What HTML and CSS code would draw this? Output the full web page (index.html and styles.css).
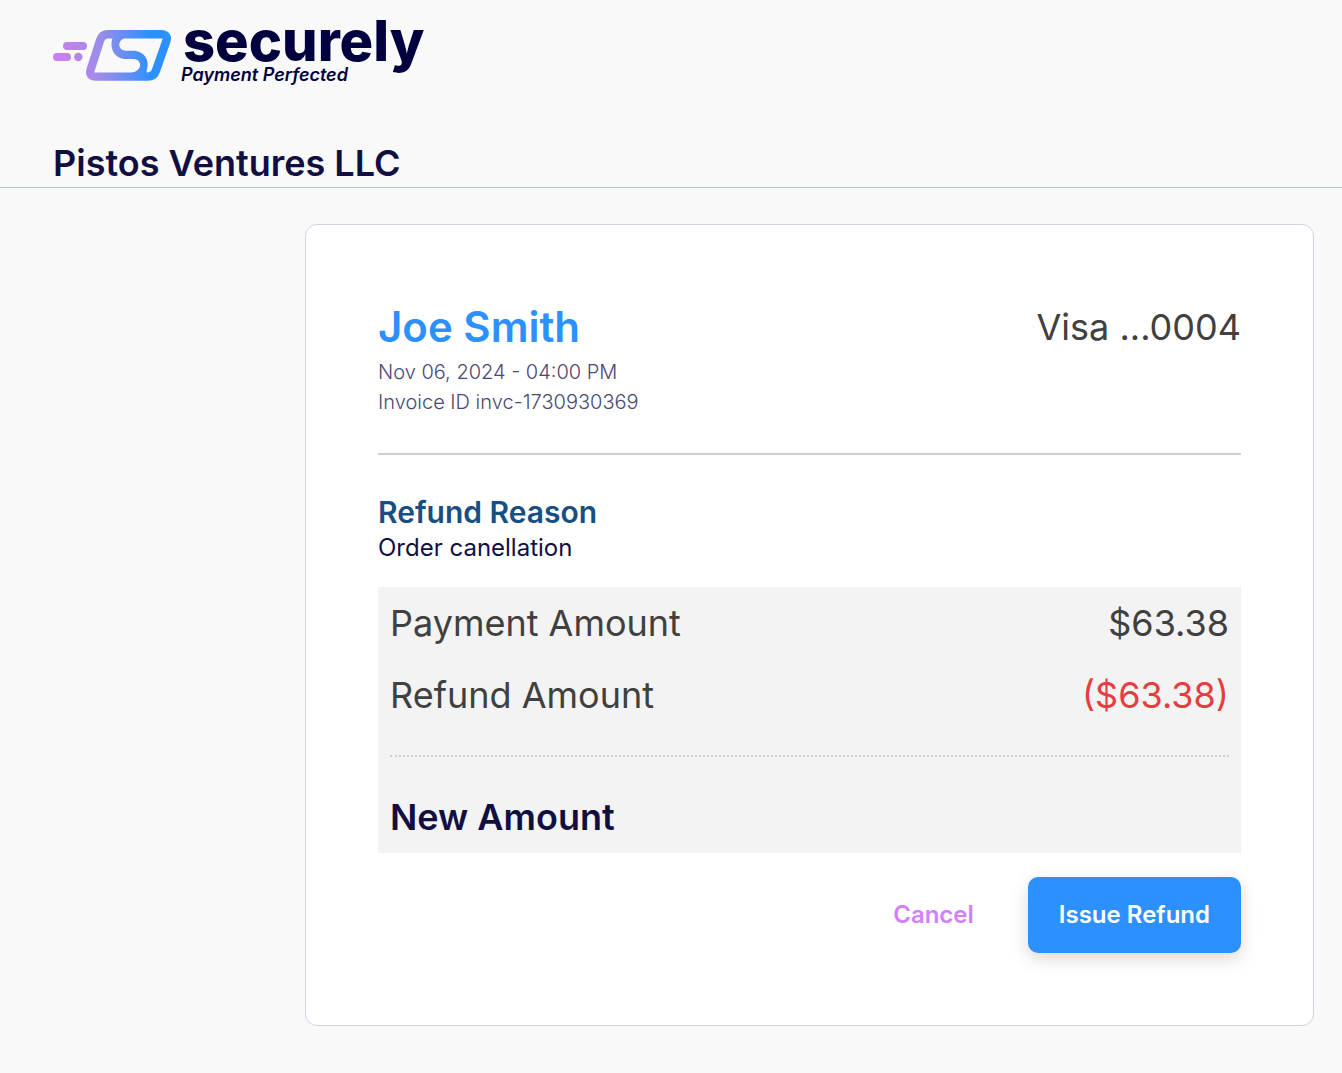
FILE: index.html
```
<!DOCTYPE html>
<html lang="en">
<head>
  <meta charset="UTF-8">
  <meta name="viewport" content="width=device-width, initial-scale=1.0">
  <title>Issue Refund | Securely</title>

  <link rel="stylesheet" href="styles.css">
</head>
<body>

  <header class="header">
    <a href="#" class="logo">
      <svg class="logo__icon" viewBox="0 0 120 53" fill="none" aria-hidden="true">
        <defs>
          <linearGradient id="logo-gradient" gradientUnits="userSpaceOnUse" x1="0" y1="30" x2="120" y2="22">
            <stop offset="0" stop-color="#d07ff0"/>
            <stop offset="0.4" stop-color="#9a8ce9"/>
            <stop offset="0.82" stop-color="#2c90ff"/>
          </linearGradient>
        </defs>
        <rect x="10" y="13" width="24" height="8" rx="4" fill="url(#logo-gradient)"/>
        <rect x="0" y="24" width="18" height="8" rx="4" fill="url(#logo-gradient)"/>
        <circle cx="25.3" cy="28" r="4.2" fill="url(#logo-gradient)"/>
        <path d="M55 5.2H108Q115.5 5.2 113.2 12.5L103 41.5Q101 47.6 94.5 47.6H43Q35.5 47.6 37.7 40.5L47 11.5Q49 5.2 55 5.2Z" stroke="url(#logo-gradient)" stroke-width="8.4"/>
        <path d="M59.5 9C56 20 62 30 73 30H80C88 30 89 38 84.5 41C83 42.5 81 43.3 79 43.6V45H94L93.5 42C97.5 31 91 21.7 80 21.7H73C65 21.7 64 12 71 9.5V8Z" fill="url(#logo-gradient)"/>
      </svg>
      <span class="logo__text">
        <span class="logo__name">securely</span>
        <span class="logo__tagline">Payment Perfected</span>
      </span>
    </a>
    <h1 class="header__title">Pistos Ventures LLC</h1>
  </header>

  <main class="main">
    <section class="card">

      <div class="customer">
        <div>
          <h2 class="customer__name">Joe Smith</h2>
          <p class="customer__info">Nov 06, 2024 - 04:00 PM</p>
          <p class="customer__info">Invoice ID invc-1730930369</p>
        </div>
        <p class="customer__method">Visa ...0004</p>
      </div>

      <div class="reason">
        <h3 class="reason__title">Refund Reason</h3>
        <p class="reason__text">Order canellation</p>
      </div>

      <dl class="summary">
        <div class="summary__row">
          <dt>Payment Amount</dt>
          <dd>$63.38</dd>
        </div>
        <div class="summary__row">
          <dt>Refund Amount</dt>
          <dd class="summary__refund">($63.38)</dd>
        </div>
        <div class="summary__row summary__row_total">
          <dt>New Amount</dt>
          <dd></dd>
        </div>
      </dl>

      <div class="actions">
        <button type="button" class="btn btn_link">Cancel</button>
        <button type="submit" class="btn btn_primary">Issue Refund</button>
      </div>

    </section>
  </main>

</body>
</html>
```
FILE: styles.css
```
*, *:after, *:before {
  box-sizing: border-box;
}

body {
  margin: 0;
  background-color: #f9f9f9;
  color: #110f42;
  font-family: Inter, Roboto, sans-serif;
}

h1, h2, h3, p, dl, dd {
  margin: 0;
}

.header {
  padding: 16px 53px 0;
  border-bottom: 1px solid #bcc6cf;
}

.header__title {
  margin-top: 53px;
  font-size: 36px;
  font-weight: 600;
  line-height: 48px;
}

.logo {
  display: inline-flex;
  gap: 8px;
  color: #00003f;
  text-decoration: none;
}

.logo__icon {
  flex: none;
  width: 120px;
  height: 53px;
  margin-top: 13px;
}

.logo__text {
  display: flex;
  flex-direction: column;
}

.logo__name {
  padding-left: 2px;
  font-size: 56px;
  font-weight: 800;
  line-height: 50px;
}

.logo__tagline {
  font-size: 18px;
  font-style: italic;
  font-weight: 600;
  line-height: 18px;
}

.main {
  padding: 36px 28px 48px 305px;
}

.card {
  padding: 72px;
  background-color: #fff;
  border: 1px solid #cdd5df;
  border-radius: 12px;
}

.customer {
  display: flex;
  justify-content: space-between;
  padding-bottom: 36px;
  border-bottom: 2px solid #d0d0d0;
}

.customer__name {
  color: #2c90ff;
  font-size: 42px;
  font-weight: 600;
  line-height: 60px;
}

.customer__info {
  color: #4b4970;
  font-size: 20px;
  font-weight: 300;
  line-height: 30px;
}

.customer__method {
  color: #404040;
  font-size: 36px;
  line-height: 60px;
}

.reason {
  padding: 38px 0 22px;
}

.reason__title {
  color: #174f82;
  font-size: 30px;
  font-weight: 600;
  line-height: 38px;
}

.reason__text {
  font-size: 24px;
  line-height: 34px;
}

.summary {
  padding: 0 12px;
  background-color: #f3f3f3;
  color: #404040;
  font-size: 36px;
}

.summary__row {
  display: flex;
  justify-content: space-between;
  line-height: 72px;
}

.summary__row_total {
  margin-top: 24px;
  padding-top: 24px;
  border-top: 2px dotted #d0d0d0;
  color: #110f42;
  font-weight: 600;
}

.summary__refund {
  color: #e53e3e;
}

.actions {
  display: flex;
  justify-content: flex-end;
  gap: 23px;
  margin-top: 24px;
}

.btn {
  padding: 23px 31px;
  background: none;
  border: none;
  border-radius: 10px;
  font-family: inherit;
  font-size: 24px;
  font-weight: 600;
  line-height: 30px;
  cursor: pointer;
}

.btn_link {
  color: #d080ff;
}

.btn_primary {
  background-color: #2c90ff;
  box-shadow: 0 6px 18px rgba(0, 0, 0, 0.15);
  color: #fff;
}
```
